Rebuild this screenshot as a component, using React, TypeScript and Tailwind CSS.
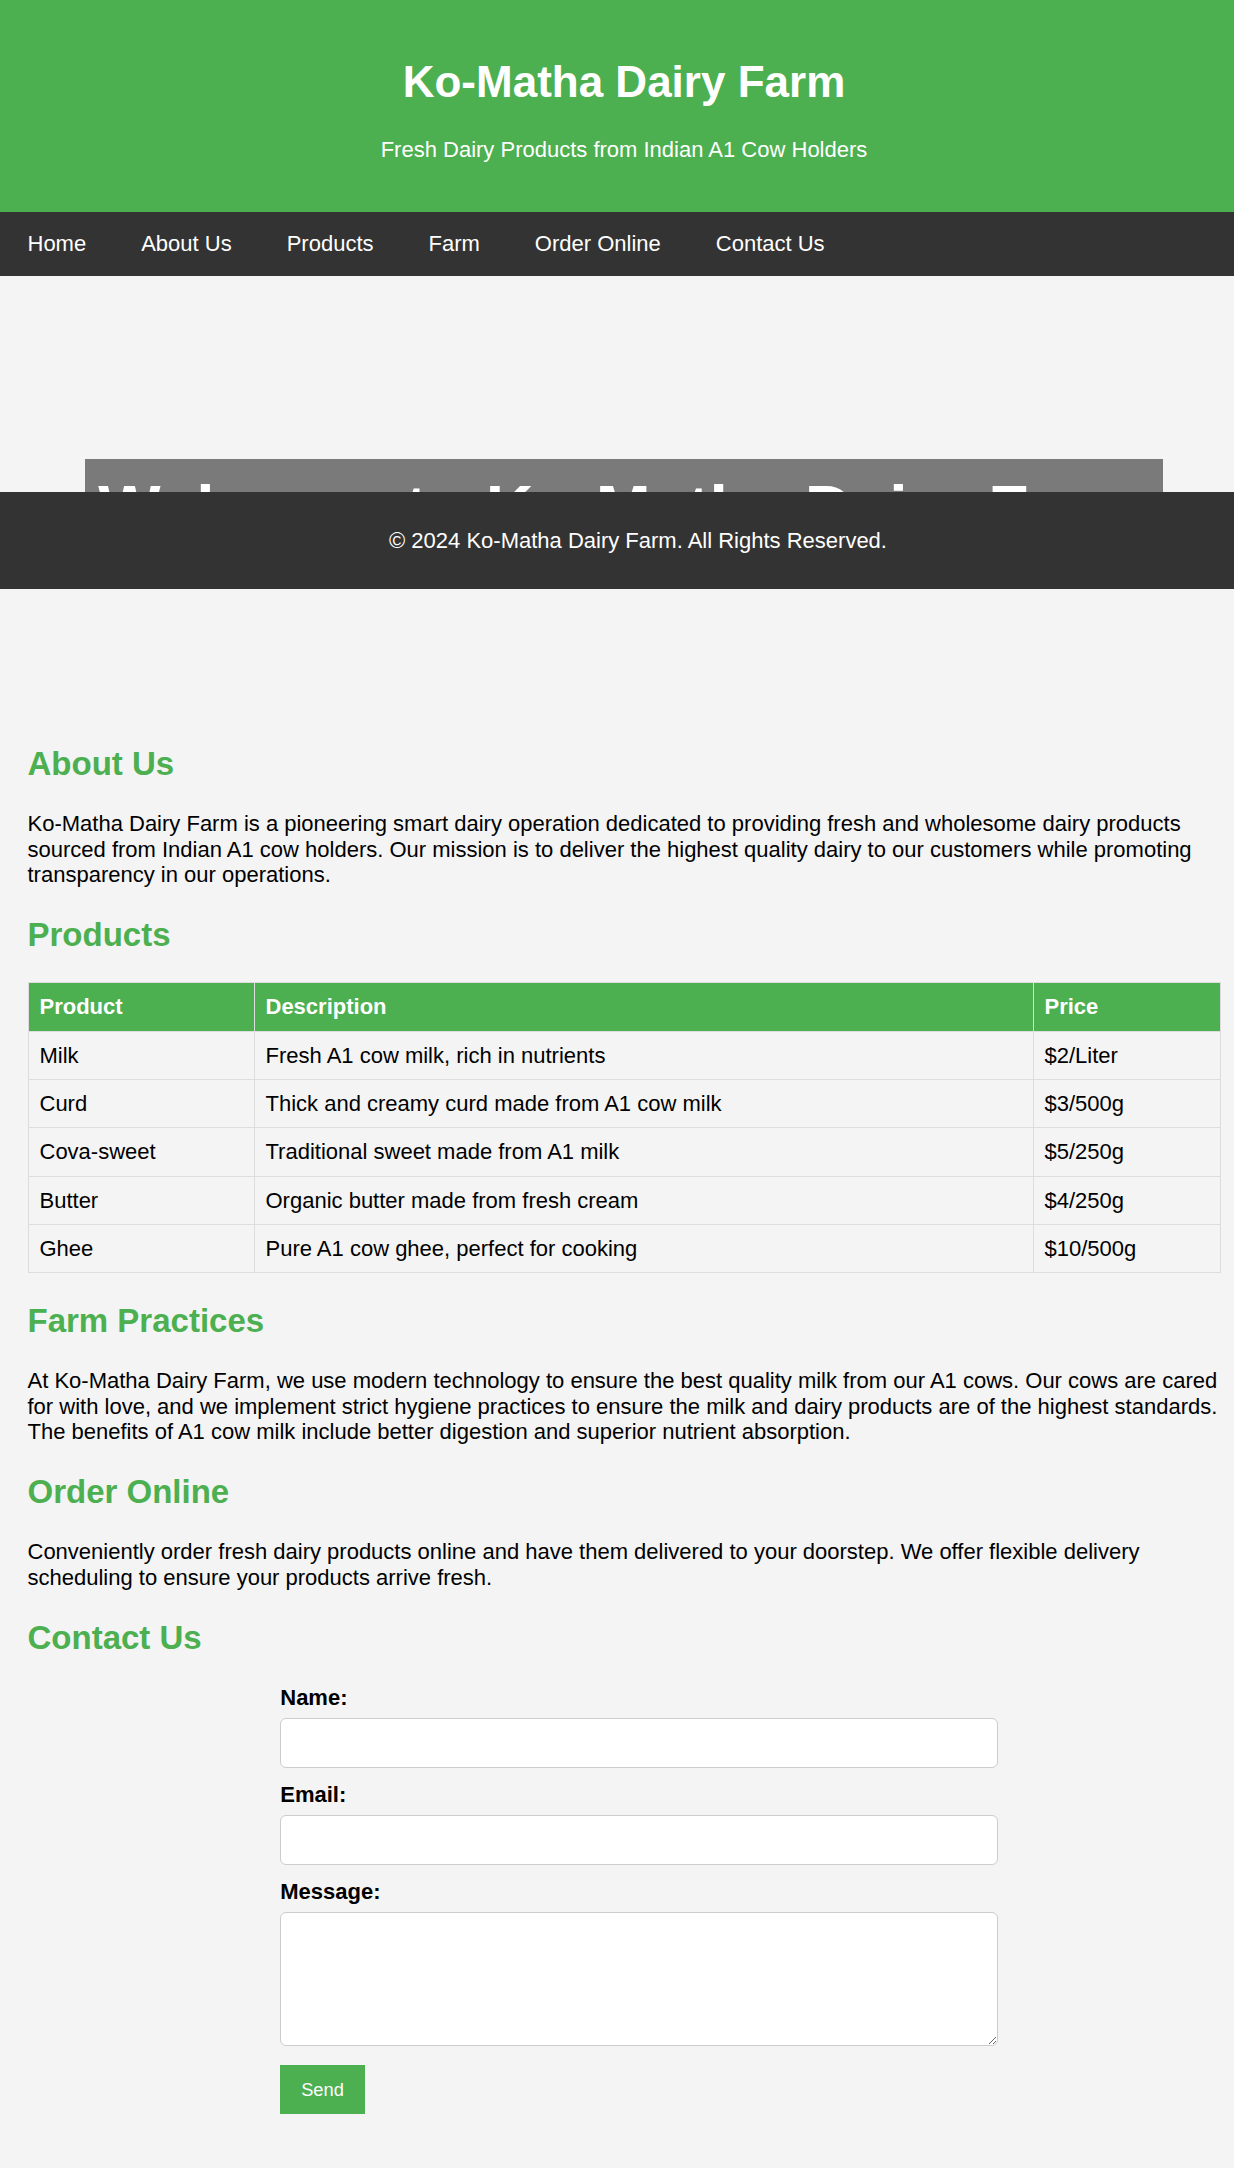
const products = [
  { name: "Milk", description: "Fresh A1 cow milk, rich in nutrients", price: "$2/Liter" },
  { name: "Curd", description: "Thick and creamy curd made from A1 cow milk", price: "$3/500g" },
  { name: "Cova-sweet", description: "Traditional sweet made from A1 milk", price: "$5/250g" },
  { name: "Butter", description: "Organic butter made from fresh cream", price: "$4/250g" },
  { name: "Ghee", description: "Pure A1 cow ghee, perfect for cooking", price: "$10/500g" },
];

const navLinks = ["Home", "About Us", "Products", "Farm", "Order Online", "Contact Us"];

function SectionTitle({ children, first }: { children: string; first?: boolean }) {
  return (
    <h2
      className={`${first ? "mt-0" : "mt-[28.6px]"} mb-[28.6px] text-[33px] font-bold leading-[1.15] text-[#4CAF50]`}
    >
      {children}
    </h2>
  );
}

function Paragraph({ children }: { children: string }) {
  return <p className="text-[22px] leading-[1.15]">{children}</p>;
}

export default function App() {
  return (
    <div
      className="relative w-full overflow-hidden bg-[#f4f4f4] text-black"
      style={{ fontFamily: '"Liberation Sans", Arial, sans-serif' }}
    >
      <div className="w-[1248px]">
        {/* header */}
        <header className="bg-[#4CAF50] py-[27.5px] text-center text-white">
          <h1 className="my-[29.5px] text-[44px] font-bold leading-[1.15]">Ko-Matha Dairy Farm</h1>
          <p className="mb-[22px] text-[22px] leading-[1.15]">
            Fresh Dairy Products from Indian A1 Cow Holders
          </p>
        </header>

        <nav className="flex h-[64px] items-center bg-[#333]">
          {navLinks.map((link) => (
            <a key={link} href="#" className="px-[27.5px] text-[22px] leading-[1.15] text-white">
              {link}
            </a>
          ))}
        </nav>

        {/* hero */}
        <section className="flex h-[469px] items-center justify-center">
          <div className="bg-black/50 p-[13.75px]">
            <h2 className="whitespace-nowrap text-[66px] font-bold leading-[1.15] text-white">
              Welcome to Ko-Matha Dairy Farm
            </h2>
          </div>
        </section>

        <main className="px-[27.5px] pb-[54.5px]">
          <SectionTitle first>About Us</SectionTitle>
          <Paragraph>
            Ko-Matha Dairy Farm is a pioneering smart dairy operation dedicated to providing fresh and
            wholesome dairy products sourced from Indian A1 cow holders. Our mission is to deliver the
            highest quality dairy to our customers while promoting transparency in our operations.
          </Paragraph>

          <SectionTitle>Products</SectionTitle>
          <table className="w-full table-fixed border-collapse text-[22px] leading-[1.15]">
            <thead>
              <tr className="bg-[#4CAF50] text-white">
                <th className="w-[226px] border border-[#ddd] p-[11px] text-left font-bold">Product</th>
                <th className="w-[779px] border border-[#ddd] p-[11px] text-left font-bold">Description</th>
                <th className="border border-[#ddd] p-[11px] text-left font-bold">Price</th>
              </tr>
            </thead>
            <tbody>
              {products.map((p) => (
                <tr key={p.name}>
                  <td className="border border-[#ddd] p-[11px]">{p.name}</td>
                  <td className="border border-[#ddd] p-[11px]">{p.description}</td>
                  <td className="border border-[#ddd] p-[11px]">{p.price}</td>
                </tr>
              ))}
            </tbody>
          </table>

          <SectionTitle>Farm Practices</SectionTitle>
          <Paragraph>
            At Ko-Matha Dairy Farm, we use modern technology to ensure the best quality milk from our A1
            cows. Our cows are cared for with love, and we implement strict hygiene practices to ensure the
            milk and dairy products are of the highest standards. The benefits of A1 cow milk include better
            digestion and superior nutrient absorption.
          </Paragraph>

          <SectionTitle>Order Online</SectionTitle>
          <Paragraph>
            Conveniently order fresh dairy products online and have them delivered to your doorstep. We offer
            flexible delivery scheduling to ensure your products arrive fresh.
          </Paragraph>

          <SectionTitle>Contact Us</SectionTitle>
          <form className="mx-auto w-[687.5px]" onSubmit={(e) => e.preventDefault()}>
            <label htmlFor="name" className="mb-[8px] block text-[22px] font-bold leading-[1.15]">
              Name:
            </label>
            <input
              id="name"
              type="text"
              className="mb-[13.5px] block h-[50px] w-[718px] rounded-[6px] border border-[#ccc] bg-white px-[13.75px] text-[18px]"
            />
            <label htmlFor="email" className="mb-[8px] block text-[22px] font-bold leading-[1.15]">
              Email:
            </label>
            <input
              id="email"
              type="email"
              className="mb-[13.5px] block h-[50px] w-[718px] rounded-[6px] border border-[#ccc] bg-white px-[13.75px] text-[18px]"
            />
            <label htmlFor="message" className="mb-[8px] block text-[22px] font-bold leading-[1.15]">
              Message:
            </label>
            <textarea
              id="message"
              rows={5}
              className="mb-[19.5px] block h-[134px] w-[718px] rounded-[6px] border border-[#ccc] bg-white p-[13.75px] text-[18px]"
            />
            <button
              type="submit"
              className="block h-[48.5px] w-[84.5px] bg-[#4CAF50] text-[18.3px] leading-[1.15] text-white"
            >
              Send
            </button>
          </form>
        </main>
      </div>

      {/* fixed footer sitting over the hero */}
      <footer className="absolute left-0 top-[492px] flex h-[97px] w-[1276px] items-center justify-center bg-[#333] text-white">
        <p className="text-[22px] leading-[1.15]">© 2024 Ko-Matha Dairy Farm. All Rights Reserved.</p>
      </footer>
    </div>
  );
}
